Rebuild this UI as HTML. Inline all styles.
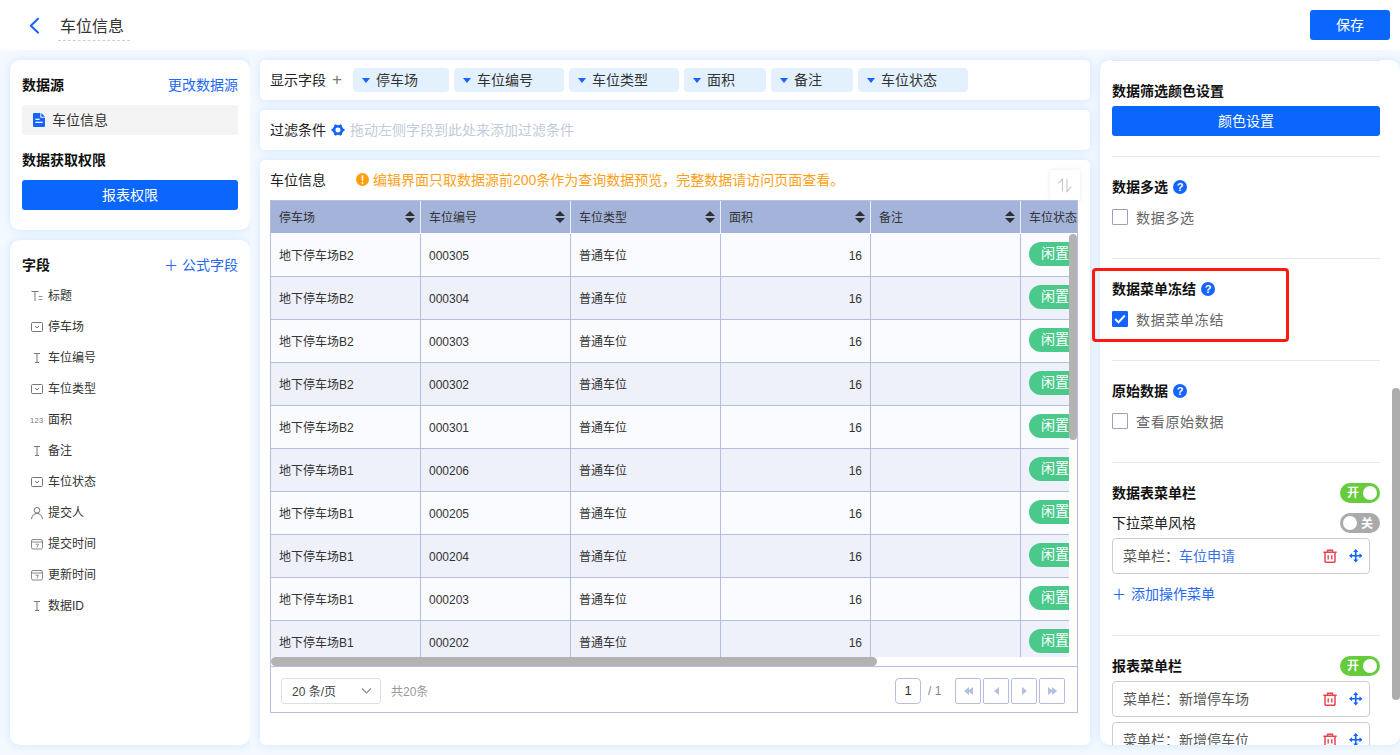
<!DOCTYPE html>
<html lang="zh-CN">
<head>
<meta charset="utf-8">
<title>车位信息</title>
<style>
*{box-sizing:border-box;margin:0;padding:0}
html,body{width:1400px;height:755px;overflow:hidden}
body{font-family:"Liberation Sans","Noto Sans CJK SC",sans-serif;font-size:14px;color:#1f2329;background:#f4f9ff;position:relative}
.abs{position:absolute}
.hdr{position:absolute;left:0;top:0;width:1400px;height:50px;background:#fff}
.hdr .back{position:absolute;left:28px;top:16px;width:14px;height:19px}
.hdr .title{position:absolute;left:58px;top:13px;width:72px;height:28px;line-height:28px;font-size:16px;color:#333;padding-left:2px;border-bottom:1px dashed #d0d0d0}
.btn{position:absolute;background:#0b66fe;color:#fff;text-align:center;border-radius:3px;font-size:14px}
.save{left:1310px;top:10px;width:80px;height:30px;line-height:30px;font-size:14px}
.panel{position:absolute;background:#fff;border-radius:10px;box-shadow:0 0 10px rgba(110,185,250,.27)}
.b{font-weight:bold;color:#111}
.blue{color:#2468f2}
.t{position:absolute;white-space:nowrap;line-height:20px}

.fi{position:absolute;left:0;width:240px;height:20px}
.fi svg{position:absolute;left:20px;top:3.500px}
.fi span{position:absolute;left:38px;top:1px;line-height:20px;font-size:12px;color:#333;white-space:nowrap}
.chip{position:absolute;top:8px;height:24px;background:#e3f1ff;border-radius:4px}
.chip i{position:absolute;left:9px;top:10px;width:0;height:0;border-left:4px solid transparent;border-right:4px solid transparent;border-top:5px solid #1664ff}
.chip span{position:absolute;left:23px;top:2px;line-height:20px;color:#333;white-space:nowrap}

.tbl{position:absolute;left:10px;top:40px;width:808px;height:513px;border:1px solid #b4bfe0;overflow:hidden;background:#fafbfe}
.th{position:absolute;top:0;height:32px;background:#a3b3d9;border-right:1px solid #eef1fb;font-size:12px;color:#333;line-height:35px;padding-left:8px;white-space:nowrap}
.th b{position:absolute;right:5px;top:10px;width:10px;height:13px;font-weight:normal}
.th b:before{content:"";position:absolute;left:0;top:0;border-left:5px solid transparent;border-right:5px solid transparent;border-bottom:5px solid #2e2e2e}
.th b:after{content:"";position:absolute;left:0;top:7px;border-left:5px solid transparent;border-right:5px solid transparent;border-top:5px solid #2e2e2e}
.tr{position:absolute;left:0;width:798px;overflow:hidden;height:43px;border-bottom:1px solid #b4bfe0;background:#fafbfe}
.tr.e{background:#eef0fa}
.td{position:absolute;top:0;height:43px;width:150px;border-right:1px solid #b4bfe0;font-size:12px;color:#333;line-height:45px;padding:0 8px;white-space:nowrap}
.tag{position:absolute;left:8px;top:8px;width:70px;height:24px;border-radius:12px;background:#4bc98a;color:#fff;font-size:14px;line-height:23px;padding-left:12px}

.hr{position:absolute;left:12px;width:268px;height:1px;background:#e8e8e8}
.q{position:absolute;width:14px;height:14px;border-radius:7px;background:#1664ff;color:#fff;font-size:11px;font-weight:bold;line-height:14px;text-align:center}
.cb{position:absolute;left:12px;width:16px;height:16px;border:1px solid #9aa0bd;border-radius:1px;background:#fff}
.cb.on{background:#1664ff;border-color:#1664ff}
.lbl{position:absolute;left:36px;line-height:20px;color:#666;white-space:nowrap;letter-spacing:.7px;margin-top:1px}
.sw{position:absolute;left:240px;width:40px;height:20px;border-radius:10px;background:#67cc3c;color:#fff;font-size:12px;font-weight:bold;line-height:20px}
.sw i{position:absolute;top:3px;width:14px;height:14px;border-radius:7px;background:#fff}
.mb{position:absolute;left:12px;width:258px;height:36px;border:1px solid #cdcdcd;border-radius:4px;background:#fff}
.mb .t{left:10px;top:7px;color:#555}
</style>
</head>
<body>
<div class="hdr">
  <svg class="back" viewBox="0 0 14 19"><path d="M10 2.800 L2.800 9.700 L10 16.600" fill="none" stroke="#1664ff" stroke-width="2.100" stroke-linecap="round" stroke-linejoin="round"/></svg>
  <div class="title">车位信息</div>
  <div class="btn save">保存</div>
</div>

<!-- LEFT 1 -->
<div class="panel" style="left:10px;top:60px;width:240px;height:170px">
  <div class="t b" style="left:12px;top:15px">数据源</div>
  <div class="t blue" style="right:12px;top:15px">更改数据源</div>
  <div class="abs" style="left:12px;top:45px;width:216px;height:30px;background:#f4f4f4;border-radius:2px">
    <svg class="abs" style="left:11px;top:8px" width="12" height="14" viewBox="0 0 12 14"><path d="M1 0h6.300v4.700h4.700V13a1 1 0 0 1-1 1H1a1 1 0 0 1-1-1V1a1 1 0 0 1 1-1z" fill="#1664ff"/><path d="M8.300 0l3.700 3.700H8.300z" fill="#1664ff"/><rect x="2.400" y="5.700" width="4.200" height="1.300" fill="#fff"/><rect x="2.400" y="8.700" width="7.200" height="1.300" fill="#fff"/></svg>
    <div class="t" style="left:30px;top:5px;color:#333">车位信息</div>
  </div>
  <div class="t b" style="left:12px;top:90px">数据获取权限</div>
  <div class="btn" style="left:12px;top:120px;width:216px;height:30px;line-height:30px">报表权限</div>
</div>

<!-- LEFT 2 -->
<div class="panel" id="fields" style="left:10px;top:240px;width:240px;height:505px">
  <div class="t b" style="left:12px;top:15px">字段</div>
  <div class="t blue" style="right:12px;top:15px">＋ 公式字段</div>
  <div class="fi" style="top:45px"><svg width="14" height="14" viewBox="0 0 14 14"><path d="M1.5 2.5h7M5 2.5v9.5" fill="none" stroke="#777" stroke-width="1"/><path d="M8.5 7.5h4M8.5 10.5h4" fill="none" stroke="#999" stroke-width="1"/></svg><span>标题</span></div>
  <div class="fi" style="top:76px"><svg width="14" height="14" viewBox="0 0 14 14"><rect x="1.5" y="2.5" width="11" height="9" rx="1" fill="none" stroke="#777" stroke-width="1"/><path d="M5 6l2 2 2-2" fill="none" stroke="#777" stroke-width="1"/></svg><span>停车场</span></div>
  <div class="fi" style="top:107px"><svg width="14" height="14" viewBox="0 0 14 14"><path d="M4 2.5h6M7 2.5v9M5 11.5h4" fill="none" stroke="#777" stroke-width="1"/></svg><span>车位编号</span></div>
  <div class="fi" style="top:138px"><svg width="14" height="14" viewBox="0 0 14 14"><rect x="1.5" y="2.5" width="11" height="9" rx="1" fill="none" stroke="#777" stroke-width="1"/><path d="M5 6l2 2 2-2" fill="none" stroke="#777" stroke-width="1"/></svg><span>车位类型</span></div>
  <div class="fi" style="top:169px"><svg width="16" height="14" viewBox="0 0 16 14"><text x="0" y="10" font-family="Liberation Sans,sans-serif" font-size="7.5" fill="#777" letter-spacing="0.3">123</text></svg><span>面积</span></div>
  <div class="fi" style="top:200px"><svg width="14" height="14" viewBox="0 0 14 14"><path d="M4 2.5h6M7 2.5v9M5 11.5h4" fill="none" stroke="#777" stroke-width="1"/></svg><span>备注</span></div>
  <div class="fi" style="top:231px"><svg width="14" height="14" viewBox="0 0 14 14"><rect x="1.5" y="2.5" width="11" height="9" rx="1" fill="none" stroke="#777" stroke-width="1"/><path d="M5 6l2 2 2-2" fill="none" stroke="#777" stroke-width="1"/></svg><span>车位状态</span></div>
  <div class="fi" style="top:262px"><svg width="14" height="14" viewBox="0 0 14 14"><circle cx="7" cy="4.3" r="2.8" fill="none" stroke="#777" stroke-width="1"/><path d="M1.5 13c.4-3.5 2.5-5.5 5.5-5.5s5.100 2 5.500 5.500" fill="none" stroke="#777" stroke-width="1"/></svg><span>提交人</span></div>
  <div class="fi" style="top:293px"><svg width="14" height="14" viewBox="0 0 14 14"><rect x="1.500" y="2.500" width="11" height="9.500" rx="1.500" fill="none" stroke="#888" stroke-width="1"/><path d="M1.500 5h11" stroke="#888" stroke-width="1"/><path d="M5.500 7.200h3l-1.600 3.300" fill="none" stroke="#888" stroke-width=".9"/></svg><span>提交时间</span></div>
  <div class="fi" style="top:324px"><svg width="14" height="14" viewBox="0 0 14 14"><rect x="1.500" y="2.500" width="11" height="9.500" rx="1.500" fill="none" stroke="#888" stroke-width="1"/><path d="M1.500 5h11" stroke="#888" stroke-width="1"/><path d="M5.500 7.200h3l-1.600 3.300" fill="none" stroke="#888" stroke-width=".9"/></svg><span>更新时间</span></div>
  <div class="fi" style="top:355px"><svg width="14" height="14" viewBox="0 0 14 14"><path d="M4 2.5h6M7 2.5v9M5 11.5h4" fill="none" stroke="#777" stroke-width="1"/></svg><span>数据ID</span></div>
</div>

<!-- CENTER column mask -->
<div class="abs" style="left:250px;top:50px;width:850px;height:705px;background:#f4f9ff"></div>
<!-- CENTER 1 -->
<div class="panel" id="c1" style="border-radius:5px;left:260px;top:60px;width:830px;height:40px"><div class="t" style="left:10px;top:10px;color:#222">显示字段</div><div class="t" style="left:72px;top:10px;color:#777;font-size:17px;font-weight:300">+</div><div class="chip" style="left:93px;width:96px"><i></i><span>停车场</span></div><div class="chip" style="left:194px;width:110px"><i></i><span>车位编号</span></div><div class="chip" style="left:309px;width:110px"><i></i><span>车位类型</span></div><div class="chip" style="left:424px;width:82px"><i></i><span>面积</span></div><div class="chip" style="left:511px;width:82px"><i></i><span>备注</span></div><div class="chip" style="left:598px;width:110px"><i></i><span>车位状态</span></div></div>
<!-- CENTER 2 -->
<div class="panel" id="c2" style="border-radius:5px;left:260px;top:110px;width:830px;height:40px"><div class="t" style="left:10px;top:10px;color:#222">过滤条件</div><svg class="abs" style="left:70.600px;top:13.300px" width="14" height="14" viewBox="0 0 14 14"><g transform="translate(7 7) scale(1.04 .97) translate(-7 -7)"><circle cx="7" cy="7" r="3.800" fill="none" stroke="#1664ff" stroke-width="2.700"/><g fill="#1664ff"><rect x="11" y="5.600" width="2.200" height="2.800" rx=".7" transform="rotate(0 7 7)"/><rect x="11" y="5.600" width="2.200" height="2.800" rx=".7" transform="rotate(60 7 7)"/><rect x="11" y="5.600" width="2.200" height="2.800" rx=".7" transform="rotate(120 7 7)"/><rect x="11" y="5.600" width="2.200" height="2.800" rx=".7" transform="rotate(180 7 7)"/><rect x="11" y="5.600" width="2.200" height="2.800" rx=".7" transform="rotate(240 7 7)"/><rect x="11" y="5.600" width="2.200" height="2.800" rx=".7" transform="rotate(300 7 7)"/></g></g></svg><div class="t" style="left:90px;top:10px;color:#c3cbda">拖动左侧字段到此处来添加过滤条件</div></div>
<!-- CENTER 3 -->
<div class="panel" id="c3" style="border-radius:5px;left:260px;top:160px;width:830px;height:585px"><div class="t" style="left:10px;top:10px;color:#222">车位信息</div><svg class="abs" style="left:96px;top:13px" width="13" height="13" viewBox="0 0 13 13"><circle cx="6.500" cy="6.500" r="6.500" fill="#ff9f0f"/><path d="M5.600 2.400h1.800l-.3 5.600h-1.200z" fill="#fff"/><circle cx="6.500" cy="10" r=".95" fill="#fff"/></svg><div class="t" style="left:113px;top:10px;color:#ff9f1a">编辑界面只取数据源前200条作为查询数据预览，完整数据请访问页面查看。</div><div class="abs" style="left:790px;top:10px;width:30px;height:30px;background:#fff;box-shadow:0 0 4px rgba(215,210,228,.55)"><svg class="abs" style="left:0;top:0" width="30" height="30" viewBox="0 0 30 30"><path d="M8.200 13.400L12.500 9V21.500M17 9V21.500L21.300 16.600" fill="none" stroke="#c3c7d1" stroke-width="1.100"/></svg></div><div class="tbl"><div class="th" style="left:0px;width:150px">停车场<b></b></div><div class="th" style="left:150px;width:150px">车位编号<b></b></div><div class="th" style="left:300px;width:150px">车位类型<b></b></div><div class="th" style="left:450px;width:150px">面积<b></b></div><div class="th" style="left:600px;width:150px">备注<b></b></div><div class="th" style="left:750px;width:150px">车位状态</div><div class="tr" style="top:33px"><div class="td" style="left:0px">地下停车场B2</div><div class="td" style="left:150px">000305</div><div class="td" style="left:300px">普通车位</div><div class="td" style="left:450px;text-align:right">16</div><div class="td" style="left:600px"></div><div class="td" style="left:750px;border-right:0;padding:0"><div class="tag">闲置</div></div></div><div class="tr e" style="top:76px"><div class="td" style="left:0px">地下停车场B2</div><div class="td" style="left:150px">000304</div><div class="td" style="left:300px">普通车位</div><div class="td" style="left:450px;text-align:right">16</div><div class="td" style="left:600px"></div><div class="td" style="left:750px;border-right:0;padding:0"><div class="tag">闲置</div></div></div><div class="tr" style="top:119px"><div class="td" style="left:0px">地下停车场B2</div><div class="td" style="left:150px">000303</div><div class="td" style="left:300px">普通车位</div><div class="td" style="left:450px;text-align:right">16</div><div class="td" style="left:600px"></div><div class="td" style="left:750px;border-right:0;padding:0"><div class="tag">闲置</div></div></div><div class="tr e" style="top:162px"><div class="td" style="left:0px">地下停车场B2</div><div class="td" style="left:150px">000302</div><div class="td" style="left:300px">普通车位</div><div class="td" style="left:450px;text-align:right">16</div><div class="td" style="left:600px"></div><div class="td" style="left:750px;border-right:0;padding:0"><div class="tag">闲置</div></div></div><div class="tr" style="top:205px"><div class="td" style="left:0px">地下停车场B2</div><div class="td" style="left:150px">000301</div><div class="td" style="left:300px">普通车位</div><div class="td" style="left:450px;text-align:right">16</div><div class="td" style="left:600px"></div><div class="td" style="left:750px;border-right:0;padding:0"><div class="tag">闲置</div></div></div><div class="tr e" style="top:248px"><div class="td" style="left:0px">地下停车场B1</div><div class="td" style="left:150px">000206</div><div class="td" style="left:300px">普通车位</div><div class="td" style="left:450px;text-align:right">16</div><div class="td" style="left:600px"></div><div class="td" style="left:750px;border-right:0;padding:0"><div class="tag">闲置</div></div></div><div class="tr" style="top:291px"><div class="td" style="left:0px">地下停车场B1</div><div class="td" style="left:150px">000205</div><div class="td" style="left:300px">普通车位</div><div class="td" style="left:450px;text-align:right">16</div><div class="td" style="left:600px"></div><div class="td" style="left:750px;border-right:0;padding:0"><div class="tag">闲置</div></div></div><div class="tr e" style="top:334px"><div class="td" style="left:0px">地下停车场B1</div><div class="td" style="left:150px">000204</div><div class="td" style="left:300px">普通车位</div><div class="td" style="left:450px;text-align:right">16</div><div class="td" style="left:600px"></div><div class="td" style="left:750px;border-right:0;padding:0"><div class="tag">闲置</div></div></div><div class="tr" style="top:377px"><div class="td" style="left:0px">地下停车场B1</div><div class="td" style="left:150px">000203</div><div class="td" style="left:300px">普通车位</div><div class="td" style="left:450px;text-align:right">16</div><div class="td" style="left:600px"></div><div class="td" style="left:750px;border-right:0;padding:0"><div class="tag">闲置</div></div></div><div class="tr e" style="top:420px"><div class="td" style="left:0px">地下停车场B1</div><div class="td" style="left:150px">000202</div><div class="td" style="left:300px">普通车位</div><div class="td" style="left:450px;text-align:right">16</div><div class="td" style="left:600px"></div><div class="td" style="left:750px;border-right:0;padding:0"><div class="tag">闲置</div></div></div><div class="abs" style="left:0;top:456px;width:808px;height:58px;background:#fff"></div><div class="abs" style="left:0;top:465px;width:808px;height:1px;background:#b4bfe0"></div><div class="abs" style="left:798px;top:32px;width:10px;height:430px;background:#fff"></div><div class="abs" style="left:798px;top:33px;width:8px;height:206px;background:#b3b3b3;border-radius:4px"></div><div class="abs" style="left:0;top:456px;width:606px;height:9px;background:#b3b3b3;border-radius:5px"></div><div class="abs" style="left:10px;top:477px;width:100px;height:26px;border:1px solid #dcdfe6;border-radius:3px;background:#fff"><div class="t" style="left:10px;top:3px;font-size:12px;color:#444">20 条/页</div><svg class="abs" style="left:79px;top:8px" width="11" height="8" viewBox="0 0 11 8"><path d="M1 1.500l4.500 4.500 4.500-4.500" fill="none" stroke="#888" stroke-width="1.100"/></svg></div><div class="t" style="left:120px;top:481px;font-size:12px;color:#999">共20条</div><div class="abs" style="left:624px;top:477px;width:26px;height:26px;border:1px solid #b4bfe0;border-radius:4px;background:#fff;text-align:center;line-height:24px;font-size:13px;color:#333">1</div><div class="t" style="left:657px;top:480px;font-size:12px;color:#888">/ 1</div><div class="abs" style="left:684px;top:477px;width:26px;height:26px;border:1px solid #b4bfe0;border-radius:2px;background:#fff"><svg class="abs" style="left:5px;top:5px" width="14" height="14" viewBox="0 0 14 14"><path d="M3 7l5-4v8z M7 7l5-4v8z" fill="#b4bfe0"/></svg></div><div class="abs" style="left:712px;top:477px;width:26px;height:26px;border:1px solid #b4bfe0;border-radius:2px;background:#fff"><svg class="abs" style="left:5px;top:5px" width="14" height="14" viewBox="0 0 14 14"><path d="M5 7l5-4v8z" fill="#b4bfe0"/></svg></div><div class="abs" style="left:740px;top:477px;width:26px;height:26px;border:1px solid #b4bfe0;border-radius:2px;background:#fff"><svg class="abs" style="left:5px;top:5px" width="14" height="14" viewBox="0 0 14 14"><path d="M5 3l5 4-5 4z" fill="#b4bfe0"/></svg></div><div class="abs" style="left:768px;top:477px;width:26px;height:26px;border:1px solid #b4bfe0;border-radius:2px;background:#fff"><svg class="abs" style="left:5px;top:5px" width="14" height="14" viewBox="0 0 14 14"><path d="M3 3l5 4-5 4z M7 3l5 4-5 4z" fill="#b4bfe0"/></svg></div></div></div>

<!-- RIGHT -->
<div class="panel" id="rp" style="left:1100px;top:60px;width:300px;height:685px;overflow:hidden"><div class="hr" style="top:0"></div><div class="t b" style="left:12px;top:21px">数据筛选颜色设置</div><div class="btn" style="left:12px;top:46px;width:268px;height:30px;line-height:30px">颜色设置</div><div class="hr" style="top:96px"></div><div class="t b" style="left:12px;top:117px">数据多选</div><div class="q" style="left:73px;top:120px">?</div><div class="cb" style="top:149px"></div><div class="lbl" style="top:147px">数据多选</div><div class="hr" style="top:198px"></div><div class="t b" style="left:12px;top:219px">数据菜单冻结</div><div class="q" style="left:101px;top:222px">?</div><div class="cb on" style="top:251px"><svg class="abs" style="left:1px;top:2px" width="12" height="10" viewBox="0 0 12 10"><path d="M1.200 5l3.300 3.300 6.300-6.800" fill="none" stroke="#fff" stroke-width="1.900"/></svg></div><div class="lbl" style="top:249px">数据菜单冻结</div><div class="hr" style="top:300px"></div><div class="t b" style="left:12px;top:321px">原始数据</div><div class="q" style="left:73px;top:324px">?</div><div class="cb" style="top:353px"></div><div class="lbl" style="top:351px">查看原始数据</div><div class="hr" style="top:402px"></div><div class="t b" style="left:12px;top:423px">数据表菜单栏</div><div class="sw" style="top:423px"><span style="position:absolute;left:7px">开</span><i style="left:23px"></i></div><div class="t" style="left:12px;top:453px;color:#222">下拉菜单风格</div><div class="sw" style="top:453px;background:#aaa"><i style="left:3px"></i><span style="position:absolute;left:21px;top:.5px">关</span></div><div class="mb" style="top:478px"><div class="t">菜单栏：<span style="color:#3b6fe8">车位申请</span></div><svg class="abs" style="left:210px;top:10px" width="14" height="14" viewBox="0 0 14 14"><path d="M0.300 3.300h13.400M4.600 3V1.200h4.800V3M2 3.600v8.600a1.100 1.100 0 0 0 1.100 1.100h7.800a1.100 1.100 0 0 0 1.100-1.100V3.600" fill="none" stroke="#e8434f" stroke-width="1.500"/><path d="M5.200 6.200v4.400M8.800 6.200v4.400" stroke="#e8434f" stroke-width="1.400"/></svg><svg class="abs" style="left:235.500px;top:10px" width="13.500" height="13.500" viewBox="0 0 15 15"><path d="M7.500 1.500v12M1.500 7.500h12" stroke="#1664ff" stroke-width="1.900"/><path d="M7.500 0l2.900 3.400H4.600zM7.500 15l2.900-3.400H4.600zM0 7.500l3.400-2.900v5.800zM15 7.500l-3.400-2.900v5.800z" fill="#1664ff"/></svg></div><div class="t blue" style="left:12px;top:524px"><span style="margin-right:1px">＋</span> 添加操作菜单</div><div class="hr" style="top:575px"></div><div class="t b" style="left:12px;top:596px">报表菜单栏</div><div class="sw" style="top:596px"><span style="position:absolute;left:7px">开</span><i style="left:23px"></i></div><div class="mb" style="top:621px"><div class="t">菜单栏：新增停车场</div><svg class="abs" style="left:210px;top:10px" width="14" height="14" viewBox="0 0 14 14"><path d="M0.300 3.300h13.400M4.600 3V1.200h4.800V3M2 3.600v8.600a1.100 1.100 0 0 0 1.100 1.100h7.800a1.100 1.100 0 0 0 1.100-1.100V3.600" fill="none" stroke="#e8434f" stroke-width="1.500"/><path d="M5.200 6.200v4.400M8.800 6.200v4.400" stroke="#e8434f" stroke-width="1.400"/></svg><svg class="abs" style="left:235.500px;top:10px" width="13.500" height="13.500" viewBox="0 0 15 15"><path d="M7.500 1.500v12M1.500 7.500h12" stroke="#1664ff" stroke-width="1.900"/><path d="M7.500 0l2.900 3.400H4.600zM7.500 15l2.900-3.400H4.600zM0 7.500l3.400-2.900v5.800zM15 7.500l-3.400-2.900v5.800z" fill="#1664ff"/></svg></div><div class="mb" style="top:662px"><div class="t">菜单栏：新增停车位</div><svg class="abs" style="left:210px;top:10px" width="14" height="14" viewBox="0 0 14 14"><path d="M0.300 3.300h13.400M4.600 3V1.200h4.800V3M2 3.600v8.600a1.100 1.100 0 0 0 1.100 1.100h7.800a1.100 1.100 0 0 0 1.100-1.100V3.600" fill="none" stroke="#e8434f" stroke-width="1.500"/><path d="M5.200 6.200v4.400M8.800 6.200v4.400" stroke="#e8434f" stroke-width="1.400"/></svg><svg class="abs" style="left:235.500px;top:10px" width="13.500" height="13.500" viewBox="0 0 15 15"><path d="M7.500 1.500v12M1.500 7.500h12" stroke="#1664ff" stroke-width="1.900"/><path d="M7.500 0l2.900 3.400H4.600zM7.500 15l2.900-3.400H4.600zM0 7.500l3.400-2.900v5.800zM15 7.500l-3.400-2.900v5.800z" fill="#1664ff"/></svg></div><div class="abs" style="left:292px;top:328px;width:8px;height:312px;background:#adadad;border-radius:4px"></div></div>
<div class="abs" style="left:1092px;top:268px;width:197px;height:74px;border:3px solid #ff1a0d;border-radius:4px"></div>
</body>
</html>
